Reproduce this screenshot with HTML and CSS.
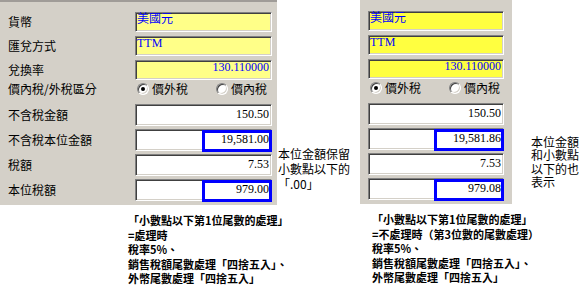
FILE: index.html
```html
<!DOCTYPE html>
<html lang="zh-Hant">

<head>
  <meta charset="UTF-8" />
  <meta name="viewport" content="width=device-width, initial-scale=1.0" />
  <title>小數點以下尾數處理</title>
  <link rel="stylesheet" href="styles.css">
</head>

<body>
  <main class="page">
    <section class="case case-left">
      <div class="case-top">
        <div class="panel panel-left">
          <div class="row">
            <span class="label">貨幣</span>
            <div class="field field-key">美國元</div>
          </div>
          <div class="row">
            <span class="label">匯兌方式</span>
            <div class="field field-key">TTM</div>
          </div>
          <div class="row">
            <span class="label">兌換率</span>
            <div class="field field-key num">130.110000</div>
          </div>
          <div class="row row-choice">
            <span class="label">價內稅/外稅區分</span>
            <div class="choices">
              <span class="choice"><i class="radio on"></i>價外稅</span>
              <span class="choice"><i class="radio"></i>價內稅</span>
            </div>
          </div>
          <div class="row row-amount">
            <span class="label">不含稅金額</span>
            <div class="field num">150.50</div>
          </div>
          <div class="row row-amount">
            <span class="label">不含稅本位金額</span>
            <div class="field num">19,581.00<span class="mark"></span></div>
          </div>
          <div class="row row-amount">
            <span class="label">稅額</span>
            <div class="field num">7.53</div>
          </div>
          <div class="row row-amount">
            <span class="label">本位稅額</span>
            <div class="field num">979.00<span class="mark"></span></div>
          </div>
        </div>
        <p class="note note-left">本位金額保留<br />小數點以下的<br />「.00」</p>
      </div>
      <p class="rule rule-left">
        「小數點以下第1位尾數的處理」<br />
        =處理時<br />
        稅率5%、<br />
        銷售稅額尾數處理「四捨五入」、<br />
        外幣尾數處理「四捨五入」
      </p>
    </section>

    <section class="case case-right">
      <div class="case-top">
        <div class="panel panel-right">
          <div class="row">
            <div class="field field-key">美國元</div>
          </div>
          <div class="row">
            <div class="field field-key">TTM</div>
          </div>
          <div class="row">
            <div class="field field-key num">130.110000</div>
          </div>
          <div class="row row-choice">
            <div class="choices">
              <span class="choice"><i class="radio on"></i>價外稅</span>
              <span class="choice"><i class="radio"></i>價內稅</span>
            </div>
          </div>
          <div class="row row-amount">
            <div class="field num">150.50</div>
          </div>
          <div class="row row-amount">
            <div class="field num">19,581.86<span class="mark"></span></div>
          </div>
          <div class="row row-amount">
            <div class="field num">7.53</div>
          </div>
          <div class="row row-amount">
            <div class="field num">979.08<span class="mark"></span></div>
          </div>
        </div>
        <p class="note note-right">本位金額<br />和小數點<br />以下的也<br />表示</p>
      </div>
      <p class="rule rule-right">
        「小數點以下第1位尾數的處理」<br />
        =不處理時（第3位數的尾數處理）<br />
        稅率5%、<br />
        銷售稅額尾數處理「四捨五入」、<br />
        外幣尾數處理「四捨五入」
      </p>
    </section>
  </main>
</body>

</html>
```

FILE: styles.css
```css
* {
  margin: 0;
  padding: 0;
  box-sizing: border-box;
}

html,
body {
  height: 100%;
  overflow: hidden;
}

body {
  background-color: #fff;
  color: #000;
  font-family: "Noto Sans CJK TC", sans-serif;
  font-size: 12px;
}

.page {
  display: flex;
  align-items: flex-start;
}

.case {
  display: flex;
  flex-direction: column;
}

.case-left {
  width: 360px;
}

.case-top {
  display: flex;
  align-items: flex-start;
}

/* grey form panels */
.panel {
  display: flex;
  flex-direction: column;
  background-color: #d4d0c8;
  padding-bottom: 1px;
}

.panel-left {
  width: 277px;
  border-top: 2px solid #a09c98;
  padding: 10px 5px 1px 8px;
}

.panel-right {
  width: 152px;
  padding: 11px 8px 1px;
}

.row {
  display: flex;
  align-items: center;
  height: 20px;
  margin-bottom: 4px;
}

.row-choice {
  height: 14px;
  margin-top: -2px;
  margin-bottom: 8px;
}

.row-amount {
  height: 22px;
  margin-bottom: 3px;
}

.label {
  width: 127px;
  flex-shrink: 0;
  line-height: 14px;
  white-space: nowrap;
}

.field {
  position: relative;
  width: 137px;
  height: 100%;
  flex-shrink: 0;
  background-color: #fff;
  border: 1px solid;
  border-color: #808080 #fff #fff #808080;
  box-shadow: inset 1px 1px #404040, inset -1px -1px #d4d0c8;
  padding: 0 2px 0 1px;
  font-family: "Liberation Serif", "Noto Sans CJK TC", serif;
  line-height: 13px;
  white-space: nowrap;
}

.panel-right .field {
  width: 136px;
}

/* key fields: pale dithered yellow on the left, full yellow on the right */
.field-key {
  color: #0000ff;
  background-color: #ffff88;
}

.panel-right .field-key {
  background-color: #ffff40;
}

.num {
  text-align: right;
}

.row-amount .field {
  line-height: 18px;
}

.mark {
  position: absolute;
  top: 0;
  right: -1px;
  width: 70px;
  height: 22px;
  border: 3px solid #0000ff;
}

/* radio buttons */
.choices {
  display: flex;
  margin-left: 2px;
}

.choice {
  display: flex;
  align-items: center;
  width: 79px;
  line-height: 14px;
}

.radio {
  display: inline-flex;
  align-items: center;
  justify-content: center;
  width: 12px;
  height: 12px;
  margin-right: 3px;
  border-radius: 50%;
  background-color: #fff;
  border: 1px solid;
  border-color: #808080 #fff #fff #808080;
  box-shadow: inset 1px 1px #404040, inset -1px -1px #d4d0c8;
}

.radio.on::after {
  content: "";
  width: 4px;
  height: 4px;
  border-radius: 50%;
  background-color: #000;
}

/* side notes */
.note {
  white-space: nowrap;
}

.note-left {
  margin: 146px 0 0 1px;
  line-height: 15px;
}

.note-right {
  margin: 135px 0 0 19px;
  line-height: 13.3px;
}

.rule {
  margin-top: 8px;
  font-size: 11px;
  font-weight: 700;
  line-height: 14.5px;
  white-space: nowrap;
}

.rule-left {
  margin-left: 128px;
}

.rule-right {
  margin-left: 12px;
}
```
